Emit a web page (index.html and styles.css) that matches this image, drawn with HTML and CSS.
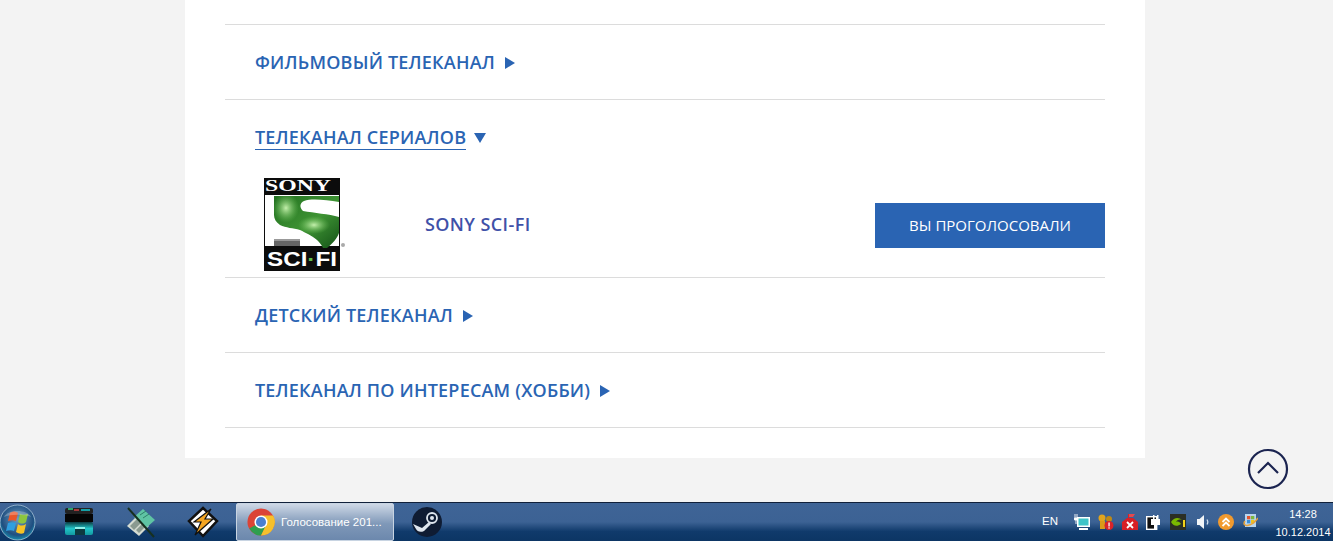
FILE: index.html
```html
<!DOCTYPE html>
<html lang="ru">
<head>
    <meta charset="UTF-8">
    <title>Голосование 2014</title>
    <link rel="stylesheet" href="styles.css">
</head>
<body>
<div class="page">
    <div class="card">
        <div class="row">
            <span class="row-title">Фильмовый телеканал</span>
            <span class="arrow-right"></span>
        </div>
        <div class="row row-open">
            <span class="row-title row-title-open">Телеканал сериалов</span>
            <span class="arrow-down"></span>
        </div>
        <div class="channel">
            <div class="channel-logo">
                <svg width="84" height="94" viewBox="0 0 84 94">
                    <defs>
                        <linearGradient id="green" x1="0" y1="0" x2="1" y2="1">
                            <stop offset="0" stop-color="#1f6d1e"/>
                            <stop offset="0.55" stop-color="#3f9434"/>
                            <stop offset="1" stop-color="#124f16"/>
                        </linearGradient>
                        <radialGradient id="shine">
                            <stop offset="0" stop-color="#c4f0ac"/>
                            <stop offset="1" stop-color="#6cbf58" stop-opacity="0"/>
                        </radialGradient>
                        <clipPath id="s-shape">
                            <path d="M10 18H75V24C62 22 48 20 40 23C36 25 35 29 39 33C50 35 65 36 75 39V55C73 61 68 66 63 70H59C57 66 55 64 53 62C47 57 42 55 36 52C29 50 22 50 16 47C12 44 10 41 10 37Z"/>
                        </clipPath>
                    </defs>
                    <rect x="0" y="0" width="76" height="93" fill="#0c0c0c"/>
                    <rect x="1" y="17" width="74" height="51" fill="#fff"/>
                    <g clip-path="url(#s-shape)">
                        <rect x="8" y="16" width="68" height="56" fill="url(#green)"/>
                        <ellipse cx="22" cy="30" rx="13" ry="15" fill="url(#shine)"/>
                        <ellipse cx="50" cy="47" rx="16" ry="9" fill="url(#shine)"/>
                    </g>
                    <rect x="10" y="63" width="26" height="5" fill="#666"/>
                    <rect x="10" y="61" width="26" height="2" fill="#999"/>
                    <text x="1" y="13" class="logo-sony" textLength="66" lengthAdjust="spacingAndGlyphs">SONY</text>
                    <text x="3" y="88" class="logo-scifi" textLength="70" lengthAdjust="spacingAndGlyphs">SCI<tspan class="logo-dot">·</tspan>FI</text>
                    <circle cx="79" cy="67" r="2" fill="#aaa"/>
                </svg>
            </div>
            <span class="channel-name">Sony Sci-Fi</span>
            <a class="vote-btn">Вы проголосовали</a>
        </div>
        <div class="row">
            <span class="row-title">Детский телеканал</span>
            <span class="arrow-right"></span>
        </div>
        <div class="row">
            <span class="row-title">Телеканал по интересам (хобби)</span>
            <span class="arrow-right"></span>
        </div>
        <div class="row-end"></div>
    </div>
    <a class="to-top">
        <svg width="42" height="42" viewBox="0 0 42 42">
            <circle cx="21" cy="21" r="19" fill="none" stroke="#1b2450" stroke-width="2.2"/>
            <path d="M11 25L21 15L31 25" fill="none" stroke="#1b2450" stroke-width="2.2"/>
        </svg>
    </a>
</div>
<div class="taskbar">
    <div class="start-orb">
        <svg width="38" height="38" viewBox="0 0 38 38">
            <defs>
                <radialGradient id="orb" cx="0.5" cy="0.4" r="0.65">
                    <stop offset="0" stop-color="#6f9cc0"/>
                    <stop offset="0.7" stop-color="#1f4f80"/>
                    <stop offset="1" stop-color="#12a0bc"/>
                </radialGradient>
            </defs>
            <circle cx="17.500" cy="19.500" r="17.500" fill="url(#orb)" stroke="#a8c4d8" stroke-width="0.8"/>
            <path d="M10 10C13 8 15 8 18 10L16 18C14 17 11 17 8 18Z" fill="#e8562a"/>
            <path d="M20 11C22 12 25 12 28 11L26 19C24 21 21 21 18 19Z" fill="#8cc63f"/>
            <path d="M8 20C11 19 13 19 16 20L14 28C12 27 9 27 6 28Z" fill="#2f9fe0"/>
            <path d="M18 21C20 23 23 23 26 21L24 30C22 31 19 31 16 29Z" fill="#f7c325"/>
            <path d="M4 14C8 6 27 6 31 14C25 11 10 11 4 14Z" fill="#fff" opacity="0.25"/>
        </svg>
    </div>
    <div class="task-icon">
        <svg width="30" height="30" viewBox="0 0 30 30">
            <defs>
                <linearGradient id="teal" x1="0" y1="0" x2="0" y2="1">
                    <stop offset="0" stop-color="#0a3a40"/>
                    <stop offset="0.5" stop-color="#22c4c8"/>
                    <stop offset="1" stop-color="#129aa0"/>
                </linearGradient>
            </defs>
            <rect x="1" y="1" width="28" height="6" rx="2" fill="#222"/>
            <rect x="4" y="1" width="5" height="2" fill="#2ea56a"/>
            <rect x="10" y="2" width="5" height="2" fill="#a33a3a"/>
            <rect x="17" y="2" width="9" height="2" fill="#16a0a6"/>
            <rect x="1" y="7" width="28" height="8" fill="#050505"/>
            <rect x="1" y="15" width="28" height="13" rx="2" fill="url(#teal)"/>
            <rect x="11" y="21" width="10" height="7" fill="#0d3a40"/>
            <rect x="11" y="20" width="10" height="2" fill="#8ff0ea"/>
        </svg>
    </div>
    <div class="task-icon">
        <svg width="32" height="32" viewBox="0 0 32 32">
            <path d="M2 20L13 9L24 20L14 30Z" fill="#d5dcd2"/>
            <path d="M5 20L13 12L17 16L9 24ZM11 24L17 18L20 21L14 27Z" fill="#8a9a90"/>
            <path d="M9 11L18 3L30 14L21 22Z" fill="#5fc4a4"/>
            <path d="M15 9L21 5M18 12L24 8" stroke="#2f7f68" stroke-width="1"/>
            <path d="M3 2L29 31" stroke="#17301f" stroke-width="2"/>
        </svg>
    </div>
    <div class="task-icon">
        <svg width="32" height="32" viewBox="0 0 32 32">
            <path d="M16 2L30 15L16 30L2 15Z" fill="#fff" stroke="#111" stroke-width="2.500"/>
            <path d="M24 3L7 16H14L8 29L26 13H18Z" fill="#f5a623" stroke="#111" stroke-width="1.200"/>
        </svg>
    </div>
    <div class="task-btn">
        <svg class="chrome" width="28" height="28" viewBox="0 0 30 30">
            <circle cx="15" cy="15" r="14.500" fill="#db4437"/>
            <path d="M15 15L2.500 22A14.500 14.500 0 0 0 15 29.500L22 16Z" fill="#2e9e4f"/>
            <path d="M15 8H28A14.500 14.500 0 0 1 15 29.500L21 17Z" fill="#f6c02c"/>
            <circle cx="15" cy="15" r="7" fill="#fff"/>
            <circle cx="15" cy="15" r="5.400" fill="#4a7fd0"/>
        </svg>
        <span class="task-label">Голосование 201...</span>
    </div>
    <div class="task-icon task-icon-steam">
        <svg width="30" height="30" viewBox="0 0 30 30">
            <circle cx="15" cy="15" r="15" fill="#0f1c33"/>
            <circle cx="20" cy="11" r="5" fill="none" stroke="#dfe6ee" stroke-width="1.800"/>
            <circle cx="20" cy="11" r="2" fill="#dfe6ee"/>
            <path d="M1 17L10 21L17 15L19 17L12 24C8 26 5 24 4 22Z" fill="#dfe6ee"/>
        </svg>
    </div>
    <div class="tray">
        <span class="tray-lang">EN</span>
        <div class="tray-icons">
            <svg width="16" height="16" viewBox="0 0 16 16">
                <rect x="3" y="3" width="13" height="10" fill="#fff"/>
                <rect x="4.500" y="4.500" width="10" height="7" fill="#3ec4c8"/>
                <path d="M1 0V4M3 0V4M0.500 4H3.500V6H0.500ZM2 6V10" stroke="#fff" stroke-width="0.900" fill="#fff"/>
                <rect x="5" y="14" width="9" height="2" fill="#fff"/>
            </svg>
            <svg width="16" height="16" viewBox="0 0 16 16">
                <circle cx="4" cy="4" r="3.500" fill="#e0a41e"/>
                <circle cx="11" cy="5" r="3" fill="#c08a14"/>
                <rect x="2" y="7" width="5" height="8" fill="#d89a1a"/>
                <circle cx="11" cy="11.500" r="4.500" fill="#d8232a"/>
                <rect x="10.400" y="8.500" width="1.300" height="4" fill="#fff"/>
                <rect x="10.400" y="13.300" width="1.300" height="1.300" fill="#fff"/>
            </svg>
            <svg width="16" height="16" viewBox="0 0 16 16">
                <path d="M0 8L5 4H11L16 8V16H0Z" fill="#d81f26"/>
                <path d="M6 0H13L11 3H6Z" fill="#e5484d"/>
                <rect x="6" y="0" width="1" height="5" fill="#d81f26"/>
                <path d="M5 8L11 14M11 8L5 14" stroke="#fff" stroke-width="1.800"/>
            </svg>
            <svg width="16" height="16" viewBox="0 0 16 16">
                <rect x="0.700" y="2.700" width="10" height="12.600" fill="#111" stroke="#fff" stroke-width="1.400"/>
                <rect x="5" y="5" width="9" height="6" fill="#fff"/>
                <rect x="7" y="1" width="1.500" height="4" fill="#fff"/>
                <rect x="11" y="1" width="1.500" height="4" fill="#fff"/>
                <rect x="8" y="11" width="3" height="4" fill="#fff"/>
            </svg>
            <svg width="16" height="16" viewBox="0 0 16 16">
                <rect x="0" y="0" width="16" height="16" fill="#2b2f25"/>
                <path d="M1 8C4 3 9 3 12 6C9 5 7 6 6 8C8 7 10 8 11 10C7 13 3 12 1 8Z" fill="#7ab800"/>
                <rect x="13" y="6" width="2" height="7" fill="#f2d21a"/>
            </svg>
            <svg width="16" height="16" viewBox="0 0 16 16">
                <path d="M3 5H5.500L10 1V15L5.500 11H3Z" fill="#f2f5f8"/>
                <path d="M13 5.500C14 7 14 9 13 10.500" fill="none" stroke="#d0dfee" stroke-width="1.200"/>
            </svg>
            <svg width="16" height="16" viewBox="0 0 16 16">
                <circle cx="8" cy="8" r="8" fill="#f29a2e"/>
                <path d="M4.500 8L8 4.500L11.500 8M4.500 12L8 8.500L11.500 12" fill="none" stroke="#fff" stroke-width="1.800"/>
            </svg>
            <svg width="16" height="16" viewBox="0 0 16 16">
                <rect x="3" y="0" width="11" height="13" fill="#b8d4ee"/>
                <rect x="5" y="2" width="3.300" height="3.300" fill="#e5532d"/>
                <rect x="9" y="2" width="3.300" height="3.300" fill="#7db93c"/>
                <rect x="5" y="6" width="3.300" height="3.300" fill="#3a8ed8"/>
                <rect x="9" y="6" width="3.300" height="3.300" fill="#f2c21e"/>
                <path d="M3 7C-1 13 9 14 16 4" fill="none" stroke="#e8a33a" stroke-width="1.500"/>
            </svg>
        </div>
        <div class="tray-clock">
            <span>14:28</span>
            <span>10.12.2014</span>
        </div>
    </div>
</div>
</body>
</html>
```
FILE: styles.css
```css
html, body {
    margin: 0;
    padding: 0;
}

body {
    height: 541px;
    overflow: hidden;
    display: flex;
    flex-direction: column;
    background: #f3f3f3;
    font-family: "Open Sans", "Noto Sans", sans-serif;
}

.page {
    height: 502px;
    position: relative;
}

.card {
    width: 880px;
    height: 434px;
    margin-left: 185px;
    padding: 24px 40px 0;
    background: #fff;
}

.row {
    height: 74px;
    padding-left: 30px;
    display: flex;
    align-items: center;
    border-top: 1px solid #dcdcdc;
}

.row-open {
    align-items: flex-start;
    height: 74px;
}

.row-title {
    font-size: 18px;
    font-weight: 600;
    letter-spacing: 0.2px;
    color: #2a64b3;
    text-transform: uppercase;
}

.row-title-open {
    margin-top: 25px;
    line-height: 24px;
    border-bottom: 1px solid #2a64b3;
}

.arrow-right {
    width: 0;
    height: 0;
    margin: 1px 0 0 10px;
    border-left: 10px solid #2a64b3;
    border-top: 6px solid transparent;
    border-bottom: 6px solid transparent;
}

.arrow-down {
    width: 0;
    height: 0;
    margin: 33px 0 0 8px;
    border-top: 10px solid #2a64b3;
    border-left: 6px solid transparent;
    border-right: 6px solid transparent;
}

.channel {
    height: 103px;
    display: flex;
    align-items: flex-start;
    padding-left: 39px;
}

.channel-logo {
    width: 161px;
    height: 94px;
    padding-top: 4px;
}

.logo-sony {
    font-family: "Liberation Serif", serif;
    font-size: 16px;
    font-weight: 700;
    fill: #fff;
}

.logo-scifi {
    font-family: "Liberation Sans", sans-serif;
    font-size: 20px;
    font-weight: 700;
    fill: #fff;
}

.logo-dot {
    fill: #5fbf4a;
}

.channel-name {
    margin-top: 38px;
    font-size: 18px;
    font-weight: 600;
    letter-spacing: 0.4px;
    color: #3f51a8;
    text-transform: uppercase;
}

.vote-btn {
    margin: 29px 0 0 auto;
    width: 230px;
    height: 45px;
    line-height: 45px;
    text-align: center;
    background: #2a64b3;
    color: #fff;
    font-size: 15px;
    text-transform: uppercase;
}

.row-end {
    border-top: 1px solid #dcdcdc;
}

.to-top {
    position: absolute;
    left: 1247px;
    top: 448px;
    width: 42px;
    height: 42px;
}

.taskbar {
    height: 38px;
    display: flex;
    align-items: center;
    color: #fff;
    border-top: 1px solid #10203a;
    background: linear-gradient(#3f6496 0, #3c6294 50%, #103a6b 75%, #0c3564 100%);
}

.start-orb {
    width: 48px;
    height: 38px;
}

.task-icon {
    width: 62px;
    display: flex;
    justify-content: center;
}

.task-btn {
    width: 158px;
    height: 38px;
    margin-left: 2px;
    display: flex;
    align-items: center;
    border: 1px solid #c8d4e2;
    border-radius: 2px;
    box-sizing: border-box;
    background: linear-gradient(#ced8e6, #7f98b8 55%, #6c88ad);
}

.chrome {
    margin: 0 6px 0 10px;
}

.task-label {
    font-family: "Liberation Sans", sans-serif;
    font-size: 11.500px;
    color: #fff;
    white-space: nowrap;
}

.task-icon-steam {
    width: 66px;
}

.tray {
    margin-left: auto;
    display: flex;
    align-items: center;
    font-family: "Liberation Sans", sans-serif;
    font-size: 11px;
}

.tray-lang {
    margin-right: 16px;
    margin-top: -3px;
    font-size: 11.500px;
}

.tray-icons {
    display: flex;
    gap: 8px;
    margin-right: 15px;
}

.tray-clock {
    width: 60px;
    display: flex;
    flex-direction: column;
    align-items: center;
    line-height: 18px;
    padding-top: 1px;
}
```
